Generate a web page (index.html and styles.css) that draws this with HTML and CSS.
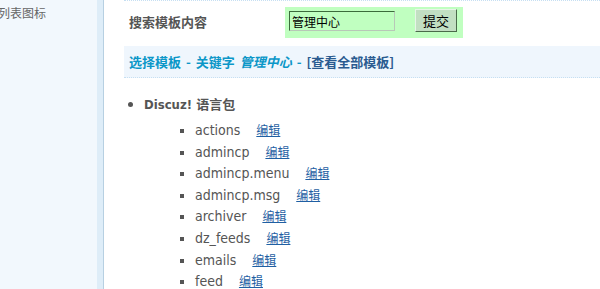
FILE: index.html
```html
<!DOCTYPE html>
<html lang="zh-CN">
  <head>
    <meta charset="UTF-8" />
    <title>模板管理</title>
    <link rel="stylesheet" href="styles.css">
  </head>
  <body>
    <div class="frame">
      <div class="sidebar">
        <div class="side-item">列表图标</div>
      </div>
      <div class="side-edge"></div>
      <div class="main">
        <div class="prev-row"></div>
        <div class="search-row">
          <span class="label">搜索模板内容</span>
          <form class="search-box">
            <input type="text" class="keyword" value="管理中心" />
            <button type="submit" class="submit">提交</button>
          </form>
        </div>
        <div class="title-row">
          <span class="crumb">选择模板 - 关键字 <em>管理中心</em> -</span> <a class="all" href="#">[查看全部模板]</a>
        </div>
        <ul class="packs">
          <li>
            <strong>Discuz! 语言包</strong>
            <ul class="files">
              <li>actions <a href="#">编辑</a></li>
              <li>admincp <a href="#">编辑</a></li>
              <li>admincp.menu <a href="#">编辑</a></li>
              <li>admincp.msg <a href="#">编辑</a></li>
              <li>archiver <a href="#">编辑</a></li>
              <li>dz_feeds <a href="#">编辑</a></li>
              <li>emails <a href="#">编辑</a></li>
              <li>feed <a href="#">编辑</a></li>
            </ul>
          </li>
        </ul>
      </div>
    </div>
  </body>
</html>
```

FILE: styles.css
```css
body {
  margin: 0;
  padding: 0;
  font-family: "Noto Sans CJK SC", sans-serif;
  font-size: 12px;
  color: #555;
  background-color: #ffffff;
  overflow: hidden;
}

.frame {
  display: flex;
  height: 289px;
}

/* left menu column */
.sidebar {
  width: 97px;
  background-color: #f2f8fd;
  overflow: hidden;
}

.side-item {
  margin-left: -2px;
  margin-top: 4px;
  color: #666;
  font-size: 12px;
  line-height: 18px;
  white-space: nowrap;
}

.side-edge {
  width: 6px;
  background-color: #deedf8;
  border-right: 1px solid #b7d0e2;
}

.main {
  flex: 1;
  padding-left: 20px;
}

.prev-row {
  height: 0;
  border-bottom: 1px dotted #c6dff2;
}

.search-row {
  display: flex;
  align-items: flex-start;
  height: 45px;
}

.label {
  width: 156px;
  padding-left: 5px;
  margin-top: 11px;
  font-size: 13px;
  font-weight: bold;
  color: #555;
}

.search-box {
  display: flex;
  align-items: flex-start;
  width: 178px;
  height: 31px;
  margin: 6px 0 0 0;
  background-color: #c0ffc0;
  box-sizing: border-box;
  padding: 4px 0 0 4px;
}

.keyword {
  width: 106px;
  height: 20px;
  box-sizing: border-box;
  margin: 0;
  padding: 0 2px;
  border: 1px solid;
  border-color: #3b6b3b #b8c8b8 #b8c8b8 #3b6b3b;
  background-color: #c0ffc0;
  font-family: "Noto Sans CJK SC", sans-serif;
  font-size: 12px;
  color: #000;
}

.submit {
  width: 42px;
  height: 23px;
  margin: -2px 0 0 20px;
  padding: 0;
  border: 1px solid;
  border-color: #e8f4e8 #4a6a4a #4a6a4a #e8f4e8;
  background-color: #c2dfc2;
  font-family: "Noto Sans CJK SC", sans-serif;
  font-size: 13px;
  color: #000;
}

.title-row {
  height: 31px;
  line-height: 31px;
  padding-left: 5px;
  background-color: #eff6fd;
  border-bottom: 1px dotted #c6dff2;
  font-size: 13px;
  font-weight: bold;
  word-spacing: 2px;
}

.crumb {
  color: #0b97c8;
}

.crumb em {
  font-style: italic;
}

.all {
  color: #2a5b90;
  text-decoration: none;
}

.packs {
  margin: 15px 0 0 0;
  padding-left: 20px;
  list-style: disc;
}

.packs > li {
  line-height: 22px;
}

.packs strong {
  font-family: "DejaVu Sans Condensed", "Noto Sans CJK SC", sans-serif;
  font-size: 13px;
  color: #555;
}

.files {
  margin: 4px 0 0 0;
  padding-left: 51px;
  list-style: square;
}

.files li {
  height: 21.6px;
  line-height: 21.6px;
  font-family: "DejaVu Sans Condensed", "Noto Sans CJK SC", sans-serif;
  font-size: 14px;
  color: #555;
}

.files a {
  margin-left: 12px;
  font-family: "Noto Sans CJK SC", sans-serif;
  font-size: 12px;
  line-height: 1;
  color: #1f5fa3;
  text-decoration: underline;
}
```
